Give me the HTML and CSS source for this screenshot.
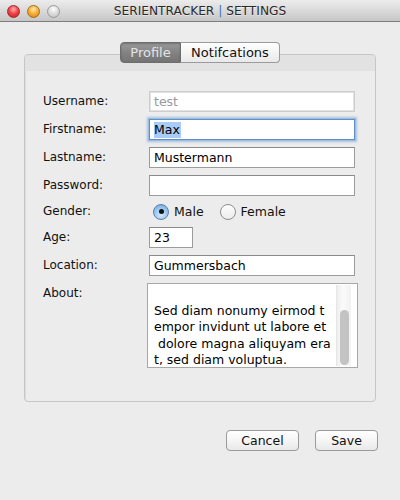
FILE: index.html
```html
<!DOCTYPE html>
<html>
<head>
<meta charset="utf-8">
<link rel="stylesheet" href="styles.css">
</head>
<body>
<div class="window">
  <div class="titlebar">
    <div class="lights">
      <span class="light red"></span>
      <span class="light yellow"></span>
      <span class="light gray"></span>
    </div>
    <div class="title">SERIENTRACKER <span class="sep">|</span> SETTINGS</div>
    <div></div>
  </div>
  <div class="content">
    <div class="tabs">
      <div class="tab active">Profile</div>
      <div class="tab notif">Notifcations</div>
    </div>
    <div class="panel">
      <div class="strip"></div>
      <div class="form">
        <div class="row"><div class="label">Username:</div><div class="field disabled">test</div></div>
        <div class="row"><div class="label">Firstname:</div><div class="field focused"><span class="sel">Max</span></div></div>
        <div class="row"><div class="label">Lastname:</div><div class="field">Mustermann</div></div>
        <div class="row"><div class="label">Password:</div><div class="field"></div></div>
        <div class="row gender"><div class="label">Gender:</div>
          <div class="radios">
            <span class="radio on"><span class="dot"></span></span><span class="rlabel">Male</span>
            <span class="radio"></span><span class="rlabel">Female</span>
          </div>
        </div>
        <div class="row"><div class="label">Age:</div><div class="field age">23</div></div>
        <div class="row"><div class="label">Location:</div><div class="field">Gummersbach</div></div>
        <div class="row about"><div class="label">About:</div>
          <div class="area">
            <div class="areatext">Sed diam nonumy eirmod t
empor invidunt ut labore et
 dolore magna aliquyam era
t, sed diam voluptua.</div>
            <div class="scroll"><div class="thumb"></div></div>
          </div>
        </div>
      </div>
    </div>
    <div class="buttons">
      <div class="btn cancel">Cancel</div>
      <div class="btn save">Save</div>
    </div>
  </div>
</div>
</body>
</html>
```
FILE: styles.css
```css
html, body {
  margin: 0;
  padding: 0;
}
body {
  background: #ececec;
  font-family: "DejaVu Sans", sans-serif;
  font-size: 12px;
  color: #111;
  width: 400px;
  height: 500px;
  overflow: hidden;
}
.titlebar {
  height: 21px;
  border-bottom: 1px solid #7e7e7e;
  background: linear-gradient(#ececec, #d6d6d6 60%, #c6c6c6);
  display: grid;
  grid-template-columns: 1fr auto 1fr;
  align-items: center;
}
.lights {
  display: flex;
  gap: 7px;
  padding-left: 7px;
  padding-top: 1px;
}
.light {
  width: 13px;
  height: 13px;
  border-radius: 50%;
  box-sizing: border-box;
}
.red {
  background: radial-gradient(circle at 50% 30%, #ffb3b3 0, #f0474b 45%, #c21a20 100%);
  border: 1px solid #a5272a;
}
.yellow {
  background: radial-gradient(circle at 50% 30%, #ffe9b0 0, #f6b23c 45%, #d27f0c 100%);
  border: 1px solid #a66b1a;
}
.gray {
  background: radial-gradient(circle at 50% 30%, #ffffff 0, #dedede 45%, #bcbcbc 100%);
  border: 1px solid #9a9a9a;
}
.title {
  color: #2a2a2a;
  font-size: 12.2px;
  padding-top: 1px;
  text-shadow: 0 1px 0 rgba(255,255,255,0.5);
}
.sep {
  color: #3d6fae;
}
.content {
  padding: 20px 24px 0 24px;
}
.tabs {
  display: flex;
  justify-content: center;
  height: 21px;
  position: relative;
  z-index: 1;
}
.tab {
  box-sizing: border-box;
  height: 21px;
  display: flex;
  align-items: center;
  justify-content: center;
  font-size: 13px;
  border: 1px solid #9b9b9b;
  background: linear-gradient(#ffffff, #f4f4f4 50%, #e9e9e9);
  color: #111;
}
.tab.active {
  width: 61px;
  border-radius: 4px 0 0 4px;
  border-color: #6d6d6d;
  background: linear-gradient(#9a9a9a, #838383 50%, #747474);
  color: #e4e4e4;
  box-shadow: inset 0 1px 2px rgba(0,0,0,0.25);
}
.tab.notif {
  width: 99px;
  border-left: none;
  border-radius: 0 4px 4px 0;
}
.panel {
  margin-top: -9px;
  height: 348px;
  box-sizing: border-box;
  border: 1px solid #c6c6c6;
  border-radius: 4px;
  box-shadow: inset 1px 1px 0 #dcdcdc;
  background: #ececec;
  overflow: hidden;
}
.strip {
  height: 16px;
  background: #e2e2e2;
}
.form {
  padding: 20px 0 0 18px;
  display: flex;
  flex-direction: column;
  gap: 7px;
}
.row {
  display: flex;
  align-items: center;
  height: 21px;
}
.label {
  width: 106px;
  line-height: 21px;
  color: #111;
}
.field {
  box-sizing: border-box;
  width: 206px;
  height: 21px;
  border: 1px solid #9c9c9c;
  border-top-color: #8a8a8a;
  background: #fff;
  padding-left: 4px;
  display: flex;
  align-items: center;
  font-size: 12.5px;
  color: #000;
}
.field.disabled {
  border-color: #cdcdcd;
  box-shadow: inset 0 0 0 1px #e2e2e2;
  color: #9a9a9a;
}
.field.focused {
  border-color: #5e8fc6;
  box-shadow: 0 0 0 1px #9cbde3, 0 0 2px 2px rgba(110,160,215,0.55);
}
.sel {
  background: #a9cbf7;
  line-height: 16px;
  padding-right: 1px;
}
.field.age {
  width: 44px;
}
.row.gender {
  height: 17px;
}
.radios {
  display: flex;
  align-items: center;
  padding-left: 4px;
}
.radio {
  box-sizing: border-box;
  width: 16px;
  height: 16px;
  border-radius: 50%;
  border: 1px solid #8e8e8e;
  background: linear-gradient(#fdfdfd, #ececec);
  display: flex;
  align-items: center;
  justify-content: center;
}
.radio.on {
  border-color: #5b7fa8;
  background: radial-gradient(circle at 50% 70%, #d4ecff 0, #9cc9f2 50%, #6aa3dc 100%);
}
.dot {
  width: 5px;
  height: 5px;
  border-radius: 50%;
  background: #111;
}
.rlabel {
  margin-left: 5px;
  margin-right: 16px;
  font-size: 12.5px;
}
.row.about {
  height: 85px;
  align-items: flex-start;
}
.area {
  box-sizing: border-box;
  width: 211px;
  height: 85px;
  margin-left: -2px;
  border: 1px solid #a8a8a8;
  background: #fff;
  display: flex;
}
.areatext {
  flex: 1;
  white-space: pre;
  padding: 19px 0 0 6px;
  line-height: 16.3px;
  font-size: 12.5px;
  color: #000;
  overflow: hidden;
}
.scroll {
  width: 15px;
  margin: 1px 6px 1px 0;
  background: linear-gradient(90deg, #eeeeee, #fafafa 40%, #f2f2f2);
  border-left: 1px solid #e6e6e6;
  box-sizing: border-box;
  display: flex;
  justify-content: center;
}
.thumb {
  width: 9px;
  height: 55px;
  margin-top: 25px;
  border-radius: 5px;
  background: #c3c3c3;
}
.buttons {
  display: flex;
  justify-content: flex-end;
  gap: 16px;
  margin-top: 28px;
  margin-right: -2px;
}
.btn {
  box-sizing: border-box;
  height: 21px;
  border: 1px solid #9a9a9a;
  border-radius: 4px;
  background: linear-gradient(#ffffff, #f5f5f5 50%, #e9e9e9);
  display: flex;
  align-items: center;
  justify-content: center;
  font-size: 12.5px;
  color: #111;
}
.btn.cancel {
  width: 73px;
}
.btn.save {
  width: 63px;
}
```
